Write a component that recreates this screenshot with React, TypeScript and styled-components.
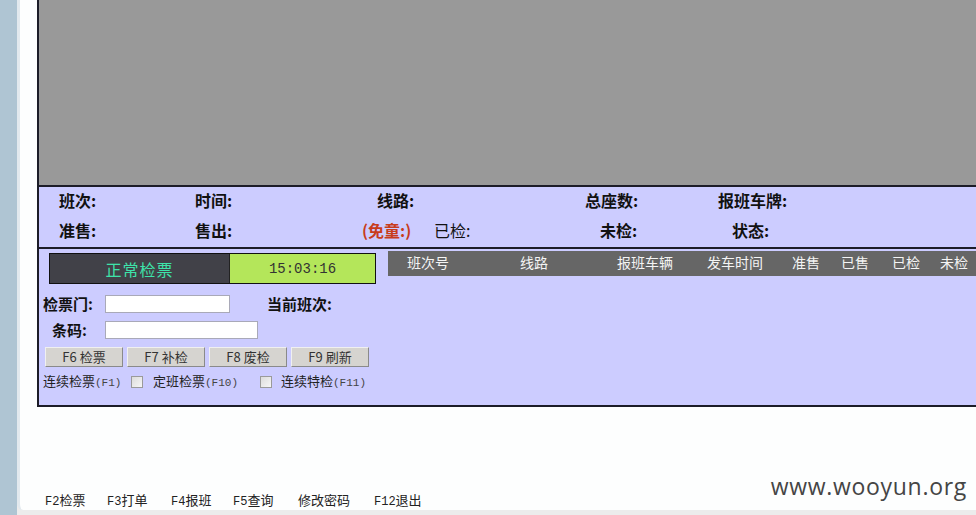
import React from "react";
import styled, { createGlobalStyle } from "styled-components";

const GlobalStyle = createGlobalStyle`
  html, body { margin: 0; padding: 0; background: #ececec; }
  body { font-family: "Noto Sans CJK SC", "Noto Sans", sans-serif; }
  * { box-sizing: border-box; }
`;

const CJK = `"Noto Sans CJK SC", "Noto Sans", sans-serif`;
const MONO = `"Liberation Mono", "Noto Sans CJK SC", monospace`;

const Page = styled.div`
  display: flex;
  width: 976px;
  height: 515px;
  overflow: hidden;
  background: #ececec;
`;

const Sidebar = styled.div`
  width: 17px;
  flex: none;
  background: #afc5d3;
`;

const Frame = styled.div`
  position: relative;
  flex: 1;
  height: 510px;
  display: flex;
  flex-direction: column;
  background: #fdfefe;
  border-left: 3px solid #e2e9ee;
  border-bottom-left-radius: 6px;
  padding-left: 17px;
  overflow: hidden;
`;

const Main = styled.div`
  border-left: 2px solid #1c1c28;
  border-bottom: 2px solid #1c1c28;
  display: flex;
  flex-direction: column;
`;

const Video = styled.div`
  height: 187px;
  background: #999999;
  border-bottom: 2px solid #1c1c28;
`;

const InfoPanel = styled.div`
  height: 62px;
  background: #ccccff;
  border-bottom: 2px solid #1c1c28;
  display: flex;
  flex-direction: column;
  padding-left: 20px;
`;

const InfoRow = styled.div`
  display: flex;
  height: 30px;
  align-items: center;
  margin-top: -2px;
  & + & {
    margin-top: 0;
  }
`;

const InfoCell = styled.div<{ $w?: number; $red?: boolean; $thin?: boolean }>`
  width: ${(p) => (p.$w ? `${p.$w}px` : "auto")};
  flex: none;
  font-family: ${CJK};
  font-size: 16px;
  font-weight: ${(p) => (p.$thin ? 400 : 700)};
  color: ${(p) => (p.$red ? "#c83c1c" : "#111")};
  white-space: nowrap;
  line-height: 20px;
`;

const Control = styled.div`
  height: 156px;
  background: #ccccff;
  display: flex;
  gap: 12px;
`;

const LeftCol = styled.div`
  width: 337px;
  flex: none;
  padding-left: 4px;
  display: flex;
  flex-direction: column;
`;

const StatusBar = styled.div`
  margin-top: 4px;
  margin-left: 6px;
  height: 31px;
  display: flex;
  border: 1px solid #111;
`;

const StatusMode = styled.div`
  width: 179px;
  background: #414148;
  color: #3ee3aa;
  font-family: ${CJK};
  font-size: 16px;
  display: flex;
  align-items: center;
  justify-content: center;
  letter-spacing: 1px;
`;

const StatusClock = styled.div`
  flex: 1;
  background: #b4e65a;
  color: #333;
  font-family: ${MONO};
  font-size: 14px;
  display: flex;
  align-items: center;
  justify-content: center;
  border-left: 1px solid #222;
`;

const FormRow = styled.div<{ $mt: number }>`
  margin-top: ${(p) => p.$mt}px;
  height: 19px;
  display: flex;
  align-items: center;
`;

const FieldLabel = styled.div<{ $pl: number; $w: number }>`
  width: ${(p) => p.$w}px;
  padding-left: ${(p) => p.$pl}px;
  flex: none;
  font-family: ${CJK};
  font-size: 15px;
  font-weight: 700;
  color: #111;
  white-space: nowrap;
`;

const TextInput = styled.input<{ $w: number }>`
  width: ${(p) => p.$w}px;
  height: 18px;
  flex: none;
  background: #fff;
  border: 1px solid #a9a9b8;
  outline: none;
  padding: 0;
`;

const ButtonRow = styled.div`
  margin-top: 8px;
  margin-left: 2px;
  display: flex;
  gap: 4px;
`;

const FnButton = styled.button`
  width: 78px;
  height: 20px;
  padding: 0;
  background: #d6d4d0;
  border: 1px solid;
  border-color: #f0f0f0 #8a8a8a #8a8a8a #f0f0f0;
  font-family: ${CJK};
  font-size: 13px;
  color: #333;
  line-height: 18px;
`;

const CheckRow = styled.div`
  margin-top: 3px;
  height: 20px;
  display: flex;
  align-items: center;
`;

const CheckText = styled.span<{ $w?: number }>`
  width: ${(p) => (p.$w ? `${p.$w}px` : "auto")};
  flex: none;
  font-family: ${CJK};
  font-size: 13px;
  color: #222;
  white-space: nowrap;
`;

const KeyHint = styled.span`
  font-family: ${MONO};
  font-size: 11px;
  color: #444;
`;

const Box = styled.span<{ $mr: number }>`
  width: 12px;
  height: 12px;
  flex: none;
  margin-right: ${(p) => p.$mr}px;
  margin-top: 4px;
  border: 1px solid #9a9a9a;
  background: linear-gradient(135deg, #dcdcdc, #f6f6f6);
`;

const RightCol = styled.div`
  flex: 1;
  padding-top: 2px;
`;

const TableHead = styled.div`
  height: 25px;
  padding-bottom: 3px;
  background: #666666;
  display: grid;
  grid-template-columns: 113px 97px 90px 85px 49px 51px 48px auto;
  padding-left: 19px;
  align-items: center;
`;

const HeadCell = styled.div`
  font-family: ${CJK};
  font-size: 14px;
  color: #f4f4f4;
  white-space: nowrap;
`;

const Footer = styled.div`
  margin-top: auto;
  margin-bottom: 2px;
  padding-left: 8px;
  display: flex;
  height: 18px;
  align-items: center;
`;

const FooterLink = styled.span<{ $w?: number }>`
  width: ${(p) => (p.$w ? `${p.$w}px` : "auto")};
  flex: none;
  font-family: ${CJK};
  font-size: 13px;
  color: #222;
  white-space: nowrap;
`;

const FooterKey = styled.span`
  font-family: ${MONO};
  font-size: 12px;
`;

const Watermark = styled.div`
  position: absolute;
  right: 9px;
  top: 470px;
  font-family: "Open Sans", "Noto Sans", sans-serif;
  font-size: 23px;
  color: #454545;
  letter-spacing: 0.7px;
`;

const headers = ["班次号", "线路", "报班车辆", "发车时间", "准售", "已售", "已检", "未检"];

const footerLinks: { key?: string; text: string; w?: number }[] = [
  { key: "F2", text: "检票", w: 62 },
  { key: "F3", text: "打单", w: 64 },
  { key: "F4", text: "报班", w: 62 },
  { key: "F5", text: "查询", w: 65 },
  { text: "修改密码", w: 76 },
  { key: "F12", text: "退出" },
];

export default function App() {
  return (
    <>
      <GlobalStyle />
      <Page>
        <Sidebar />
        <Frame>
          <Main>
            <Video />
            <InfoPanel>
              <InfoRow>
                <InfoCell $w={136}>班次:</InfoCell>
                <InfoCell $w={182}>时间:</InfoCell>
                <InfoCell $w={208}>线路:</InfoCell>
                <InfoCell $w={133}>总座数:</InfoCell>
                <InfoCell>报班车牌:</InfoCell>
              </InfoRow>
              <InfoRow>
                <InfoCell $w={136}>准售:</InfoCell>
                <InfoCell $w={167}>售出:</InfoCell>
                <InfoCell $w={72} $red>(免童:)</InfoCell>
                <InfoCell $w={166} $thin>已检:</InfoCell>
                <InfoCell $w={132}>未检:</InfoCell>
                <InfoCell>状态:</InfoCell>
              </InfoRow>
            </InfoPanel>
            <Control>
              <LeftCol>
                <StatusBar>
                  <StatusMode>正常检票</StatusMode>
                  <StatusClock>15:03:16</StatusClock>
                </StatusBar>
                <FormRow $mt={10}>
                  <FieldLabel $pl={0} $w={62}>检票门:</FieldLabel>
                  <TextInput $w={125} />
                  <FieldLabel $pl={37} $w={140}>当前班次:</FieldLabel>
                </FormRow>
                <FormRow $mt={7}>
                  <FieldLabel $pl={9} $w={62}>条码:</FieldLabel>
                  <TextInput $w={153} />
                </FormRow>
                <ButtonRow>
                  <FnButton>F6 检票</FnButton>
                  <FnButton>F7 补检</FnButton>
                  <FnButton>F8 废检</FnButton>
                  <FnButton>F9 刷新</FnButton>
                </ButtonRow>
                <CheckRow>
                  <CheckText $w={88}>
                    连续检票<KeyHint>(F1)</KeyHint>
                  </CheckText>
                  <Box $mr={10} />
                  <CheckText $w={107}>
                    定班检票<KeyHint>(F10)</KeyHint>
                  </CheckText>
                  <Box $mr={9} />
                  <CheckText>
                    连续特检<KeyHint>(F11)</KeyHint>
                  </CheckText>
                </CheckRow>
              </LeftCol>
              <RightCol>
                <TableHead>
                  {headers.map((h) => (
                    <HeadCell key={h}>{h}</HeadCell>
                  ))}
                </TableHead>
              </RightCol>
            </Control>
          </Main>
          <Footer>
            {footerLinks.map((l) => (
              <FooterLink key={l.text} $w={l.w}>
                {l.key && <FooterKey>{l.key}</FooterKey>}
                {l.text}
              </FooterLink>
            ))}
          </Footer>
          <Watermark>www.wooyun.org</Watermark>
        </Frame>
      </Page>
    </>
  );
}
